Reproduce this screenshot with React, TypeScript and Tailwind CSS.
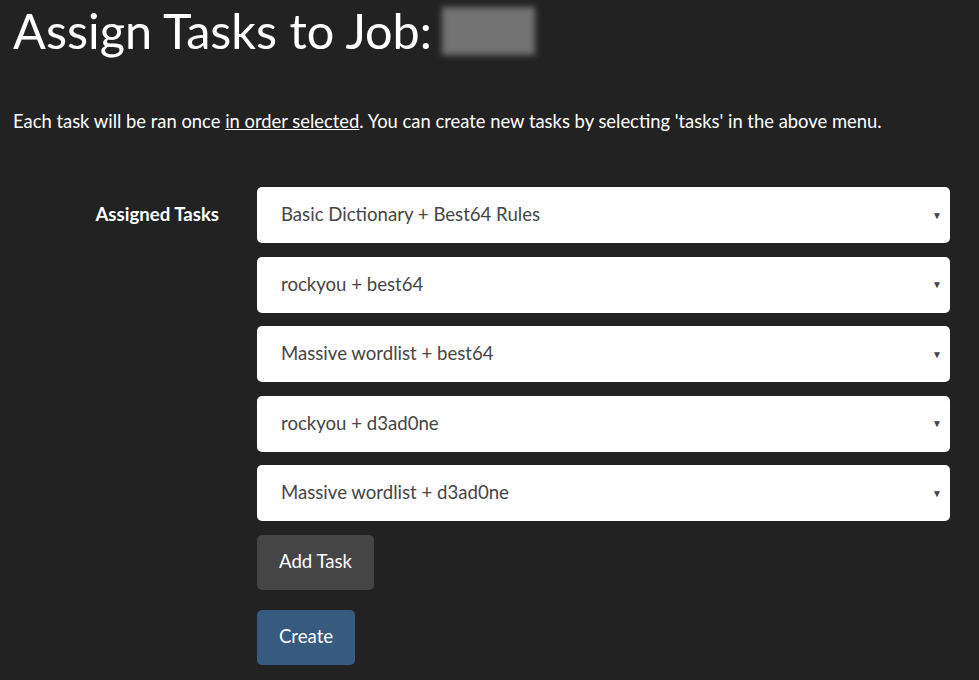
import React from "react";

const tasks = [
  "Basic Dictionary + Best64 Rules",
  "rockyou + best64",
  "Massive wordlist + best64",
  "rockyou + d3ad0ne",
  "Massive wordlist + d3ad0ne",
];

export default function App() {
  return (
    <div
      className="min-h-[680px] bg-[#222222] text-white pl-[13px] pr-[29px]"
      style={{ fontFamily: "Lato, 'Open Sans', sans-serif" }}
    >
      <h1 className="flex items-center pt-[4px] text-[48.6px] leading-[1.1] font-normal">
        <span>Assign Tasks to Job:</span>
        <span className="ml-[10px] inline-block h-[48px] w-[93px] bg-[#737373] blur-[3px]" />
      </h1>

      <p className="mt-[52px] text-[18.4px] leading-[1.4]">
        Each task will be ran once <span className="underline">in order selected</span>. You can
        create new tasks by selecting 'tasks' in the above menu.
      </p>

      <div className="mt-[52px] flex">
        <label className="w-[206px] shrink-0 pt-[14px] text-right text-[18.6px] font-bold">
          Assigned Tasks
        </label>
        <div className="ml-[38px] flex flex-1 flex-col gap-[13.5px]">
          {tasks.map((t) => (
            <div
              key={t}
              className="flex h-[56px] items-center justify-between rounded-[5px] bg-white pl-[24px] pr-[8px] text-[18.6px] text-[#464545]"
            >
              <span>{t}</span>
              <span className="text-[10px] text-[#444]">▼</span>
            </div>
          ))}
          <div className="flex flex-col items-start gap-[20px]">
            <button
              type="button"
              className="h-[55px] rounded-[5px] bg-[#464545] px-[22px] text-[18.6px] text-white"
            >
              Add Task
            </button>
            <button
              type="button"
              className="h-[55px] rounded-[5px] bg-[#375a7f] px-[22px] text-[18.6px] text-white"
            >
              Create
            </button>
          </div>
        </div>
      </div>
    </div>
  );
}
